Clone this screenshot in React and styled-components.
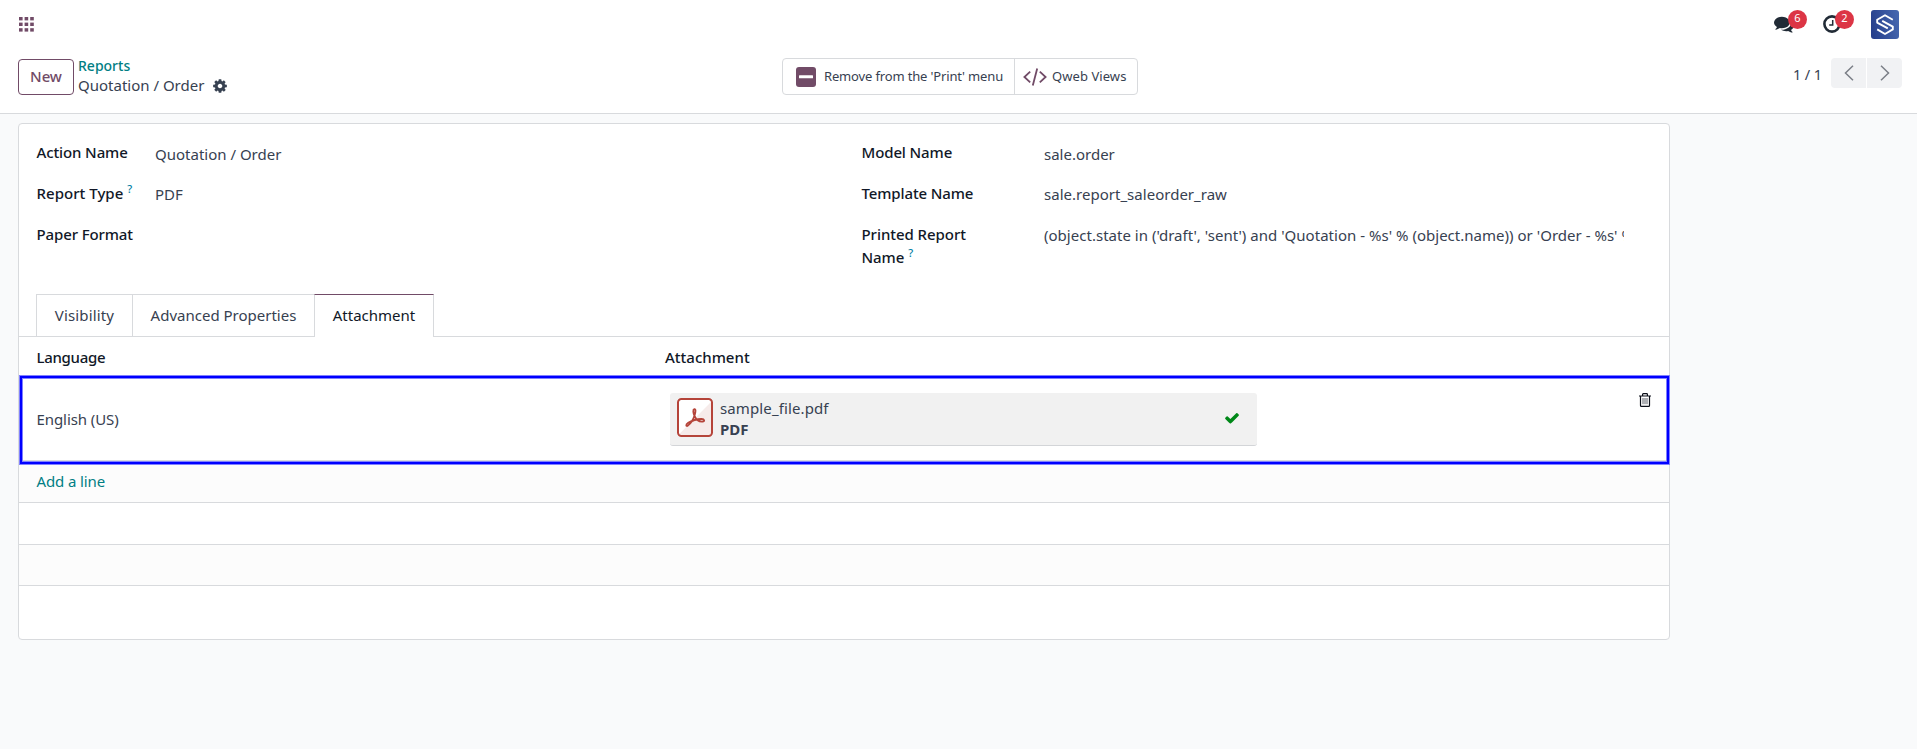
import React from "react";
import styled, { createGlobalStyle, css } from "styled-components";

const GlobalStyle = createGlobalStyle`
  *, *::before, *::after { box-sizing: border-box; }
  body {
    margin: 0;
    background: #f9fafb;
    color: #374151;
    font: 15px/23px "Noto Sans", "Open Sans", sans-serif;
  }
  button { font: inherit; color: inherit; background: none; border: 0; padding: 0; margin: 0; }
  svg { display: block; flex: none; }
`;

const line = "#d8dadd";
const brand = "#714b67";
const teal = "#017e84";

const Page = styled.div`
  min-height: 749px;
  overflow: hidden;
`;

/* ---------- header ---------- */

const Header = styled.header`
  height: 114px;
  background: #fff;
  border-bottom: 1px solid ${line};
`;

const Navbar = styled.nav`
  display: flex;
  align-items: flex-start;
  height: 48px;
  padding: 10px 18px 0 19px;
`;

const AppsIcon = styled.svg`
  width: 15px;
  height: 15px;
  margin-top: 7px;
  fill: ${brand};
`;

const Systray = styled.div`
  display: flex;
  align-items: flex-start;
  margin-left: auto;
`;

const TrayItem = styled.div`
  position: relative;
  width: ${(p) => p.$width}px;
  height: 29px;
  padding-top: ${(p) => p.$top}px;
  color: #212b36;
`;

const Badge = styled.span`
  position: absolute;
  top: 0;
  left: ${(p) => p.$left}px;
  width: 19px;
  height: 19px;
  border-radius: 50%;
  background: #dc3545;
  color: #fff;
  font-size: 11px;
  line-height: 15px;
  text-align: center;
`;

const ControlPanel = styled.div`
  display: flex;
  align-items: flex-start;
  height: 65px;
  padding: 6px 15px 0 18px;
`;

const Left = styled.div`
  display: flex;
  width: 764px;
`;

const NewButton = styled.button`
  width: 56px;
  height: 36px;
  margin-top: 5px;
  padding-bottom: 1px;
  border: 1px solid ${brand};
  border-radius: 4px;
  color: ${brand};
  font-weight: 500;
  letter-spacing: -0.1px;
`;

const Breadcrumb = styled.div`
  margin-left: 4px;
  line-height: 21px;
`;

const Crumb = styled.div`
  height: 21px;
  padding-top: 1px;
  color: ${teal};
  font-size: 14px;
  font-weight: 500;
`;

const Current = styled.div`
  display: flex;
  align-items: center;
  gap: 8px;
`;

const ActionGroup = styled.div`
  display: flex;
  width: 356px;
  height: 37px;
  margin-top: 4px;
  border: 1px solid ${line};
  border-radius: 4px;
`;

const Action = styled.button`
  display: flex;
  align-items: center;
  width: ${(p) => p.$width}px;
  padding-left: ${(p) => p.$pad}px;
  gap: ${(p) => p.$gap}px;
  font-size: 13px;
  letter-spacing: ${(p) => p.$spacing || 0}px;
  white-space: nowrap;
  & + & { border-left: 1px solid ${line}; }
`;

const Pager = styled.div`
  display: flex;
  margin: 4px 0 0 auto;
`;

const PagerCount = styled.span`
  margin: 5px 9px 0 0;
  font-size: 14.5px;
  letter-spacing: -0.1px;
`;

const PagerButton = styled.button`
  display: grid;
  place-items: center;
  width: 35px;
  height: 30px;
  padding-bottom: 1px;
  background: #f1f2f4;
  border-radius: 4px 0 0 4px;
  & + & { margin-left: 1px; border-radius: 0 4px 4px 0; }
`;

/* ---------- form sheet ---------- */

const Sheet = styled.main`
  display: flex;
  flex-direction: column;
  width: 1652px;
  height: 517px;
  margin: 9px 0 0 18px;
  background: #fff;
  border: 1px solid ${line};
  border-radius: 4px;
`;

const Fields = styled.section`
  display: grid;
  grid-template-columns: 825px 1fr;
  height: 170px;
  padding: 17px 0 0 17.5px;
`;

const FieldGroup = styled.div`
  display: grid;
  grid-template-columns: ${(p) => p.$label}px ${(p) => p.$value}px;
  grid-auto-rows: 41px;
`;

const Label = styled.label`
  width: 130px;
  color: #111827;
  font-weight: 500;
  letter-spacing: ${(p) => p.$spacing ?? -0.12}px;
  white-space: ${(p) => (p.$wrap ? "normal" : "nowrap")};
`;

const Hint = styled.sup`
  color: #0180a5;
  font-size: 11px;
  line-height: 0;
  vertical-align: 6px;
`;

const Value = styled.span`
  padding-top: ${(p) => p.$drop ?? 1}px;
  overflow: hidden;
  white-space: nowrap;
  letter-spacing: ${(p) => p.$spacing || 0}px;
`;

const Tabs = styled.div`
  display: flex;
  height: 43px;
  padding-left: 17px;
  border-bottom: 1px solid ${line};
`;

const Tab = styled.button`
  width: ${(p) => p.$width}px;
  height: 42px;
  border: solid ${line};
  border-width: 1px 1px 0;
  padding-bottom: 1px;
  letter-spacing: ${(p) => p.$spacing || 0}px;
  & + & { margin-left: -1px; }
  ${(p) =>
    p.$active &&
    css`
      height: 43px;
      padding-bottom: 2px;
      background: #fff;
      border-top-color: ${brand};
      color: #111827;
    `}
`;

const columns = css`
  display: grid;
  grid-template-columns: 646px 1fr 31px;
`;

const HeadRow = styled.div`
  ${columns}
  height: 38px;
  padding-top: 9px;
  color: #111827;
  font-weight: 500;
  letter-spacing: -0.1px;
`;

const HeadCell = styled.div`
  padding-left: ${(p) => (p.$first ? 17.5 : 0)}px;
  letter-spacing: ${(p) => (p.$first ? -0.3 : 0)}px;
`;

const RecordRow = styled.div`
  ${columns}
  height: 90px;
  margin-right: -1px;
  background: #fff;
  border: 1px solid #8080ff;
  box-shadow: inset 0 0 0 2px #0000ff, inset 0 0 0 3px #8080ff, inset 0 -4px 0 ${line};
`;

const LanguageCell = styled.div`
  align-self: center;
  padding: 0 0 1px 16.5px;
  letter-spacing: -0.08px;
`;

const FileCard = styled.div`
  display: flex;
  width: 587px;
  height: 53px;
  margin: 17px 0 0 4px;
  padding: 5px 17px 0 7px;
  background: #f1f1f1;
  border-bottom: 1px solid #d3d5d8;
  border-radius: 3px;
`;

const FileText = styled.div`
  margin-left: 7px;
  line-height: 21px;
`;

const FileName = styled.div`
  letter-spacing: 0.12px;
`;

const FileType = styled.div`
  font-weight: 700;
`;

const CheckWrap = styled.span`
  margin: 12px 0 0 auto;
  color: #008818;
`;

const TrashButton = styled.button`
  align-self: start;
  margin: 17px 0 0 1px;
  color: #0b0f18;
`;

const Row = styled.div`
  height: ${(p) => p.$height}px;
  padding: 5px 0 0 17.5px;
  background: ${(p) => (p.$striped ? "#fcfcfc" : "#fff")};
  border-bottom: 1px solid ${line};
`;

const AddLine = styled.a`
  color: ${teal};
  letter-spacing: -0.12px;
`;

/* ---------- icons ---------- */

const Solid = ({ d, size }) => (
  <svg width={size} height={size} viewBox="0 0 1792 1792" fill="currentColor">
    <path d={d} />
  </svg>
);

const cog =
  "M1152 896q0-106-75-181t-181-75-181 75-75 181 75 181 181 75 181-75 75-181zm512-109v222q0 12-8 23t-20 13l-185 28q-19 54-39 91 35 50 107 138 10 12 10 25t-9 23q-27 37-99 108t-94 71q-12 0-26-9l-138-108q-44 23-91 38-16 136-29 186-7 28-36 28h-222q-14 0-24.5-8.5t-11.5-21.5l-28-184q-49-16-90-37l-141 107q-10 9-25 9-14 0-25-11-126-114-165-168-7-10-7-23 0-12 8-23 15-21 51-66.5t54-70.5q-27-50-41-99l-183-27q-13-2-21-12.5t-8-23.5v-222q0-12 8-23t19-13l186-28q14-46 39-92-40-57-107-138-10-12-10-24 0-10 9-23 26-36 98.5-107.5t94.5-71.5q13 0 26 10l138 107q44-23 91-38 16-136 29-186 7-28 36-28h222q14 0 24.5 8.5t11.5 21.5l28 184q49 16 90 37l142-107q9-9 24-9 13 0 25 10 129 119 165 170 7 8 7 22 0 12-8 23-15 21-51 66.5t-54 70.5q26 50 41 98l183 28q13 2 21 12.5t8 23.5z";
const check =
  "M1671 566q0 40-28 68l-724 724-136 136q-28 28-68 28t-68-28l-136-136-362-362q-28-28-28-68t28-68l136-136q28-28 68-28t68 28l294 295 656-657q28-28 68-28t68 28l136 136q28 28 28 68z";
const comments =
  "M1408 768q0 139-94 257t-256.5 186.5-353.5 68.5q-86 0-176-16-124 88-278 128-36 9-86 16h-3q-11 0-20.5-8t-11.5-21q-1-3-1-6.5t.5-6.5 2-6l2.5-5 3.5-5.5 4-5 4.5-5 4-4.500q5-6 23-25t26-29.5 22.5-29 25-38.5 20.5-44q-124-72-195-177t-71-224q0-139 94-257t256.5-186.5 353.5-68.5 353.5 68.5 256.5 186.5 94 257zm384 256q0 120-71 224.5t-195 176.5q10 24 20.5 44t25 38.5 22.5 29 26 29.5 23 25q1 1 4 4.5t4.5 5 4 5 3.5 5.5l2.5 5 2 6 .5 6.5-1 6.5q-3 14-13 22t-22 7q-50-7-86-16-154-40-278-128-90 16-176 16-271 0-472-132 58 4 88 4 161 0 309-45t264-129q125-92 192-212t67-254q0-77-23-152 129 71 204 178t75 230z";

const AppsGrid = () => (
  <AppsIcon viewBox="0 0 15 15">
    {[0, 5.6, 11.2].map((y) =>
      [0, 5.6, 11.2].map((x) => <rect key={`${x}-${y}`} x={x} y={y} width="3.6" height="3.4" />)
    )}
  </AppsIcon>
);

const ClockIcon = () => (
  <svg width="18" height="18" viewBox="0 0 18 18" fill="none" stroke="currentColor">
    <circle cx="9" cy="9" r="7.6" strokeWidth="2.6" />
    <path d="M9.7 5v5H6.2" strokeWidth="1.5" />
  </svg>
);

const Avatar = () => (
  <svg width="28" height="29" viewBox="0 0 28 29">
    <defs>
      <linearGradient id="avatar" x1="0" x2="1" y1="0.6" y2="0.4">
        <stop offset="0" stopColor="#263f8c" />
        <stop offset="1" stopColor="#4566ae" />
      </linearGradient>
    </defs>
    <rect width="28" height="29" rx="3" fill="url(#avatar)" />
    <g fill="none" stroke="#fff" strokeWidth="1.9" strokeLinejoin="round">
      <path d="M21.800 9.800 14 5.200 6.200 9.800V12.600L16.800 18.400" />
      <path d="M6.200 19.400 14 24 21.800 19.400V16.600L11.200 10.800" />
    </g>
  </svg>
);

const MinusSquare = () => (
  <svg width="20" height="20" viewBox="0 0 20 20">
    <rect width="20" height="20" rx="3" fill={brand} />
    <rect x="3" y="8.3" width="14" height="3" rx="0.5" fill="#fff" />
  </svg>
);

const CodeIcon = () => (
  <svg width="24" height="18" viewBox="0 0 24 18" fill="none" stroke={brand} strokeWidth="1.8">
    <path d="M7.2 3.6 1.4 9l5.8 5.4M16.8 3.6 22.6 9l-5.8 5.4M14.2.6 9.8 17.4" />
  </svg>
);

const Chevron = ({ d }) => (
  <svg width="10" height="16" viewBox="0 0 10 16" fill="none" stroke="#7b7f87" strokeWidth="1.5">
    <path d={d} />
  </svg>
);

const PdfIcon = () => (
  <svg width="36" height="39" viewBox="0 0 36 39">
    <rect x="1" y="1" width="34" height="37" rx="3.5" fill="#fff" />
    <path d="M35 3v31.500q0 3.500-3.500 3.500H4q-1.500 0-2.400-1.200Z" fill="#f6ebea" />
    <rect x="1" y="1" width="34" height="37" rx="3.5" fill="none" stroke="#b5443a" strokeWidth="2" />
    <path
      d="M17.300 11.200c-1.700.4-1 3.900.2 6.700 1.600 3.600 5 6 8.100 5.700 2.500-.3 1.900-2.500-1-2.600-4.400-.1-9.100 1.200-13.400 3.700-3 1.900-2 4.200-.3 2.900 2.800-2.200 5.600-6.600 6.800-10.600.9-3.200 1.300-6.200-.4-5.800Z"
      fill="none"
      stroke="#b5443a"
      strokeWidth="1.8"
      strokeLinejoin="round"
    />
  </svg>
);

const TrashIcon = () => (
  <svg width="12" height="14" viewBox="0 0 12 14" fill="none" stroke="currentColor">
    <path d="M0 3h12M3.600 2.500V1.400q0-.7.700-.7h3.400q.7 0 .7.700v1.100" strokeWidth="1.200" />
    <path d="M1.500 3v9.400q0 .9.900.9h7.200q.9 0 .9-.9V3" strokeWidth="1.200" />
    <path d="M4 5v6.200M6 5v6.200M8 5v6.200" strokeWidth="0.9" stroke="#4b4f58" />
  </svg>
);

/* ---------- page ---------- */

export default function App() {
  return (
    <Page>
      <GlobalStyle />
      <Header>
        <Navbar>
          <AppsGrid />
          <Systray>
            <TrayItem $width={49} $top={4}>
              <Solid d={comments} size={20} />
              <Badge $left={14}>6</Badge>
            </TrayItem>
            <TrayItem $width={48} $top={5}>
              <ClockIcon />
              <Badge $left={12}>2</Badge>
            </TrayItem>
            <Avatar />
          </Systray>
        </Navbar>
        <ControlPanel>
          <Left>
            <NewButton>New</NewButton>
            <Breadcrumb>
              <Crumb>Reports</Crumb>
              <Current>
                Quotation / Order <Solid d={cog} size={16} />
              </Current>
            </Breadcrumb>
          </Left>
          <ActionGroup>
            <Action $width={231} $pad={13} $gap={8} $spacing={-0.15}>
              <MinusSquare />
              Remove from the 'Print' menu
            </Action>
            <Action $width={123} $pad={8} $gap={5} $spacing={0.07}>
              <CodeIcon />
              Qweb Views
            </Action>
          </ActionGroup>
          <Pager>
            <PagerCount>1 / 1</PagerCount>
            <PagerButton>
              <Chevron d="M9 .8 1.500 8 9 15.200" />
            </PagerButton>
            <PagerButton>
              <Chevron d="M1 .8 8.500 8 1 15.200" />
            </PagerButton>
          </Pager>
        </ControlPanel>
      </Header>

      <Sheet>
        <Fields>
          <FieldGroup $label={118.5} $value={500}>
            <Label>Action Name</Label>
            <Value $drop={2}>Quotation / Order</Value>
            <Label $spacing={0.03}>
              Report Type <Hint>?</Hint>
            </Label>
            <Value>PDF</Value>
            <Label>Paper Format</Label>
            <Value />
          </FieldGroup>
          <FieldGroup $label={182.5} $value={580}>
            <Label>Model Name</Label>
            <Value $drop={2}>sale.order</Value>
            <Label>Template Name</Label>
            <Value $spacing={0.02}>sale.report_saleorder_raw</Value>
            <Label $wrap $spacing={-0.05}>
              Printed Report Name <Hint>?</Hint>
            </Label>
            <Value $spacing={0.02}>
              (object.state in ('draft', 'sent') and 'Quotation - %s' % (object.name)) or 'Order - %s' % (object.name))
            </Value>
          </FieldGroup>
        </Fields>

        <Tabs>
          <Tab $width={97} $spacing={0.15}>Visibility</Tab>
          <Tab $width={183}>Advanced Properties</Tab>
          <Tab $width={120} $active>Attachment</Tab>
        </Tabs>

        <HeadRow>
          <HeadCell $first>Language</HeadCell>
          <HeadCell>Attachment</HeadCell>
        </HeadRow>
        <RecordRow>
          <LanguageCell>English (US)</LanguageCell>
          <FileCard>
            <PdfIcon />
            <FileText>
              <FileName>sample_file.pdf</FileName>
              <FileType>PDF</FileType>
            </FileText>
            <CheckWrap>
              <Solid d={check} size={16} />
            </CheckWrap>
          </FileCard>
          <TrashButton aria-label="Delete">
            <TrashIcon />
          </TrashButton>
        </RecordRow>
        <Row $height={38} $striped>
          <AddLine>Add a line</AddLine>
        </Row>
        <Row $height={42} />
        <Row $height={41} $striped />
      </Sheet>
    </Page>
  );
}
